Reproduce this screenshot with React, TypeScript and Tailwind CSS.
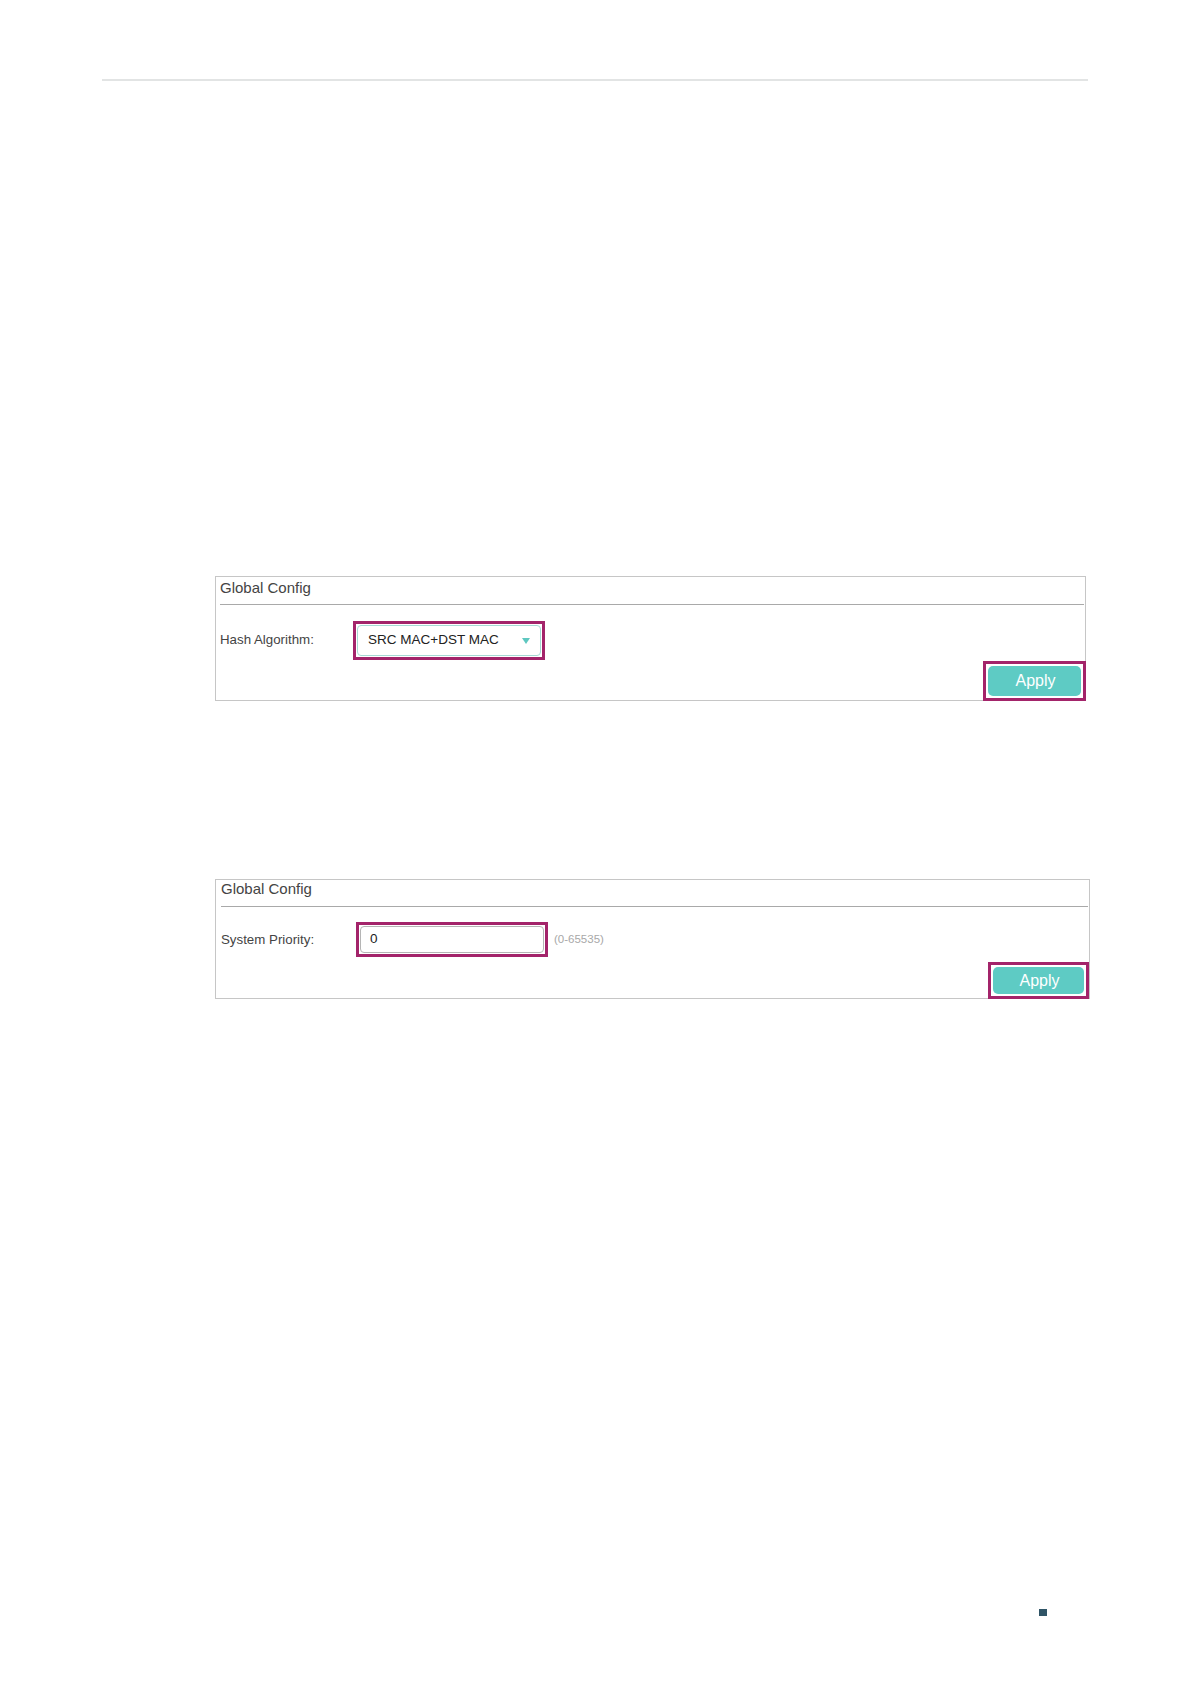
import React from "react";

function ApplyBox({ w, h, extra }: { w: string; h: string; extra: string }) {
  return (
    <div className={`${w} ${h} ${extra} border-[3px] border-[#a3246a] p-[2px] box-border`}>
      <div className="w-full h-full rounded-[5px] bg-[#5ecbc4] text-white text-[16px] flex items-center justify-center leading-none pl-[2px]">
        Apply
      </div>
    </div>
  );
}

export default function App() {
  return (
    <div
      className="w-[1191px] h-[1684px] bg-white flex flex-col overflow-hidden"
      style={{ fontFamily: '"Liberation Sans", Arial, sans-serif' }}
    >
      <div className="mt-[79px] ml-[102px] w-[986px] h-[2px] bg-[#e2e4e4]" />

      {/* Panel 1 */}
      <div className="mt-[495px] ml-[215px] w-[871px] h-[125px] border border-[#c6c6c6] box-border flex flex-col">
        <div className="h-[27px] pt-[2px] pl-[4px] text-[15px] leading-[17px] text-[#444]">Global Config</div>
        <div className="ml-[4px] mr-[1px] h-px bg-[#a9a9a9]" />
        <div className="mt-[16px] flex items-center">
          <div className="w-[137px] pl-[4px] text-[13.3px] text-[#444] -mt-[1px]">Hash Algorithm:</div>
          <div className="w-[192px] h-[39px] border-[3px] border-[#a3246a] p-[1px] box-border">
            <div className="w-full h-full rounded-[4px] border border-[#a6dad4] box-border flex items-center justify-between pl-[10px] pr-[10px]">
              <span className="text-[13.5px] text-[#222]">SRC MAC+DST MAC</span>
              <svg width="8" height="6" viewBox="0 0 8 6">
                <path d="M0 0 L8 0 L4 6 Z" fill="#5ec7c0" />
              </svg>
            </div>
          </div>
        </div>
        <div className="mt-auto flex justify-end">
          <ApplyBox w="w-[103px]" h="h-[40px]" extra="-mr-px -mb-px" />
        </div>
      </div>

      {/* Panel 2 */}
      <div className="mt-[178px] ml-[215px] w-[875px] h-[120px] border border-[#c6c6c6] box-border flex flex-col">
        <div className="h-[26px] pt-[0px] pl-[5px] text-[15px] leading-[17px] text-[#444]">Global Config</div>
        <div className="ml-[5px] mr-[1px] h-px bg-[#a9a9a9]" />
        <div className="mt-[15px] flex items-center">
          <div className="w-[140px] pl-[5px] text-[13.3px] text-[#444]">System Priority:</div>
          <div className="w-[192px] h-[35px] border-[3px] border-[#a3246a] p-[1px] box-border">
            <div className="w-full h-full rounded-[4px] border border-[#b5b5b5] box-border flex items-center pl-[9px]">
              <span className="text-[13.5px] text-[#222]">0</span>
            </div>
          </div>
          <div className="ml-[6px] text-[11.5px] text-[#a8a8a8]">(0-65535)</div>
        </div>
        <div className="mt-auto flex justify-end">
          <ApplyBox w="w-[101px]" h="h-[37px]" extra="-mb-px" />
        </div>
      </div>

      <div className="mt-[610px] ml-[1039px] w-[8px] h-[7px] bg-[#2f5466]" />
    </div>
  );
}
